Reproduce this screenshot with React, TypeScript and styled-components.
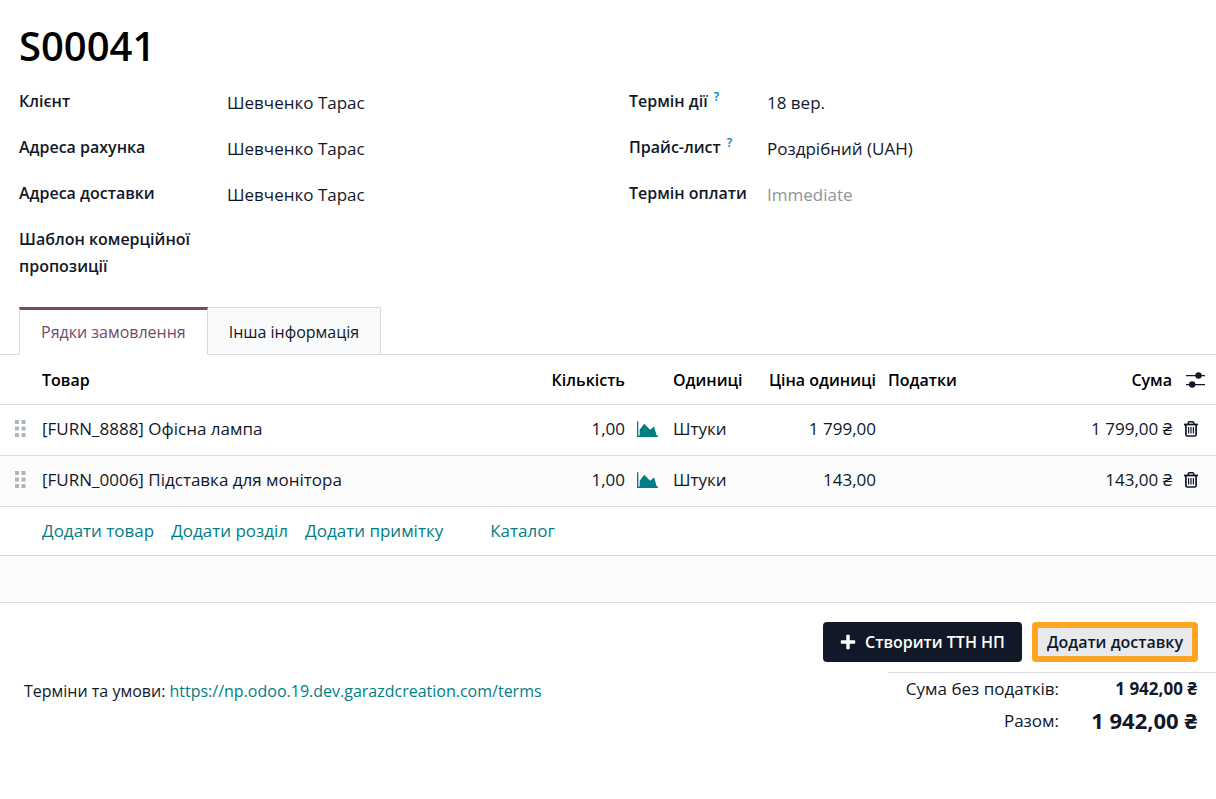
import React from "react";
import styled, { createGlobalStyle, css } from "styled-components";

const GlobalStyle = createGlobalStyle`
  *, *::before, *::after { box-sizing: border-box; }
  body {
    margin: 0;
    background: #fff;
    color: #111827;
    font: 400 17px/27px "Open Sans", "Noto Sans", sans-serif;
  }
  button { font: inherit; color: inherit; border: 0; background: none; padding: 0; cursor: pointer; }
  a { color: #017e84; text-decoration: none; }
  svg { display: block; }
`;

const Sheet = styled.main`
  padding-top: 19px;
`;

const Title = styled.h1`
  margin: 0;
  padding: 0 19px;
  color: #000;
  font-size: 40px;
  line-height: 54px;
  font-weight: 600;
`;

const FieldGroups = styled.div`
  display: grid;
  grid-template-columns: 1fr 1fr;
  column-gap: 42px;
  padding: 15px 19px 0;
`;

const FieldGroup = styled.dl<{ $label: number }>`
  display: grid;
  grid-template-columns: ${(p) => p.$label}px 1fr;
  align-content: start;
  row-gap: 19px;
  margin: 0;
`;

const FieldLabel = styled.dt`
  font-weight: 600;
  font-size: 16px;
  white-space: pre-line;
`;

const FieldValue = styled.dd<{ $muted?: boolean }>`
  margin: 0;
  padding-top: 1px;
  height: 27px;
  color: ${(p) => (p.$muted ? "#8f939b" : "inherit")};
`;

const Help = styled.sup`
  color: #0180a5;
  font-size: 12px;
  line-height: 1;
  margin-left: 6px;
`;

const Tabs = styled.div`
  display: flex;
  margin-top: 27px;
  padding: 0 19px;
  border-bottom: 1px solid #d8dadd;
`;

const Tab = styled.button<{ $active?: boolean }>`
  height: 48px;
  margin-bottom: -1px;
  padding: 0 21px;
  border: 1px solid #d8dadd;
  background: #f9fafb;
  font-size: 16px;
  ${(p) =>
    p.$active
      ? css`
          background: #fff;
          color: #714b67;
          border-top: 3px solid #714b67;
          border-bottom-color: #fff;
        `
      : css`
          border-left: 0;
          padding-top: 2px;
        `}
`;

const Lines = styled.table`
  width: 100%;
  table-layout: fixed;
  border-collapse: separate;
  border-spacing: 0;
`;

const Col = styled.col<{ $w?: number }>`
  width: ${(p) => (p.$w ? `${p.$w}px` : "auto")};
`;

const HeadCell = styled.th<{ $right?: boolean }>`
  height: 50px;
  padding: 1px 6px 0;
  border-bottom: 1px solid #d8dadd;
  color: #000;
  font-size: 16px;
  font-weight: 600;
  white-space: nowrap;
  text-align: ${(p) => (p.$right ? "right" : "left")};
`;

const Cell = styled.td<{ $right?: boolean }>`
  height: 51px;
  padding: 0 6px 3px;
  border-bottom: 1px solid #d8dadd;
  white-space: nowrap;
  text-align: ${(p) => (p.$right ? "right" : "left")};
`;

const HandleCell = styled(Cell)`
  padding-left: 15px;
`;

const Row = styled.tr`
  &:nth-child(even) { background: #fcfcfc; }
`;

const IconButton = styled.button`
  display: block;
  color: #111827;
`;

const Handle = styled(IconButton)`
  color: #adb5bd;
`;

const ForecastButton = styled(IconButton)`
  color: #017e84;
`;

const ColumnsButton = styled(IconButton)`
  margin-left: 2px;
`;

const AddRow = styled.div`
  display: flex;
  align-items: center;
  gap: 17px;
  height: 49px;
  padding: 0 42px 2px;
  border-bottom: 1px solid #d8dadd;
`;

const LinkButton = styled.button<{ $apart?: boolean }>`
  color: #017e84;
  margin-left: ${(p) => (p.$apart ? 30 : 0)}px;
`;

const Filler = styled.div`
  height: 47px;
  background: #fcfcfc;
  border-bottom: 1px solid #d8dadd;
`;

const Actions = styled.div`
  display: flex;
  justify-content: flex-end;
  gap: 10px;
  padding: 19px 18px 10px;
`;

const PrimaryButton = styled.button`
  display: flex;
  align-items: center;
  gap: 9px;
  height: 40px;
  padding: 0 17px;
  border-radius: 4px;
  background: #111827;
  color: #fff;
  font-size: 16px;
  font-weight: 600;
`;

const SecondaryButton = styled.button`
  height: 40px;
  padding: 0 9px;
  border: 6px solid #ffa521;
  border-radius: 4px;
  background: #e7e9ed;
  font-size: 16px;
  font-weight: 600;
  line-height: 28px;
`;

const Footer = styled.footer`
  display: flex;
  justify-content: space-between;
`;

const Terms = styled.p`
  margin: 0;
  padding: 6px 0 0 24px;
  font-size: 16px;
`;

const Totals = styled.dl`
  display: grid;
  grid-template-columns: 171px 138px;
  row-gap: 5px;
  justify-items: end;
  margin: 0;
  padding: 2px 19px 0 0;
  border-top: 1px solid #d8dadd;
`;

const TotalLabel = styled.dt``;

const TotalValue = styled.dd<{ $large?: boolean }>`
  margin: 0;
  font-weight: 700;
  font-size: ${(p) => (p.$large ? 22 : 17)}px;
`;

const DragIcon = () => (
  <svg width="11" height="18" viewBox="0 0 11 18" fill="currentColor" aria-hidden="true">
    {[0, 6.5, 13].map((y) => (
      <React.Fragment key={y}>
        <rect x="0" y={y} width="4" height="4" />
        <rect x="6.5" y={y} width="4" height="4" />
      </React.Fragment>
    ))}
  </svg>
);

const AreaChartIcon = () => (
  <svg width="21" height="16" viewBox="0 0 2048 1536" fill="currentColor" aria-hidden="true">
    <path d="M2048 1408v128H0V0h128v1408h1920zM1664 512l256 896H256V832l448-576 576 576z" />
  </svg>
);

const TrashIcon = () => (
  <svg width="14" height="16" viewBox="0 0 14 16" fill="none" stroke="currentColor" aria-hidden="true">
    <path d="M0 3.5h14" strokeWidth="1.8" />
    <path d="M4.200 3.200V2q0-1.200 1.200-1.200h3.200q1.200 0 1.200 1.200v1.200" strokeWidth="1.500" />
    <path d="M1.900 3.500v10q0 1.500 1.500 1.500h7.200q1.500 0 1.500-1.500v-10" strokeWidth="1.700" />
    <path d="M4.600 6v6.500M7 6v6.500M9.400 6v6.500" strokeWidth="1.200" />
  </svg>
);

const AdjustIcon = () => (
  <svg width="19" height="16" viewBox="0 0 19 16" fill="currentColor" aria-hidden="true">
    <path d="M0 2.900h19v1.300H0zM0 11.900h19v1.300H0z" />
    <circle cx="12.500" cy="3.500" r="3.200" />
    <circle cx="6.200" cy="12.500" r="3.200" />
  </svg>
);

const PlusIcon = () => (
  <svg width="16" height="16" viewBox="0 0 16 16" fill="currentColor" aria-hidden="true">
    <path d="M6.300 1.600q0-.8.8-.8h1.800q.8 0 .8.8v4.700h4.700q.8 0 .8.800v1.800q0 .8-.8.800H9.700v4.700q0 .8-.8.8H7.100q-.8 0-.8-.8V9.700H1.600q-.8 0-.8-.8V7.100q0-.8.8-.8h4.700z" />
  </svg>
);

type Field = { label: string; value?: string; help?: boolean; muted?: boolean };

const customerFields: Field[] = [
  { label: "Клієнт", value: "Шевченко Тарас" },
  { label: "Адреса рахунка", value: "Шевченко Тарас" },
  { label: "Адреса доставки", value: "Шевченко Тарас" },
  { label: "Шаблон комерційної\nпропозиції" },
];

const termFields: Field[] = [
  { label: "Термін дії", value: "18 вер.", help: true },
  { label: "Прайс-лист", value: "Роздрібний (UAH)", help: true },
  { label: "Термін оплати", value: "Immediate", muted: true },
];

const orderLines = [
  { product: "[FURN_8888] Офісна лампа", qty: "1,00", unit: "Штуки", price: "1 799,00", total: "1 799,00 ₴" },
  { product: "[FURN_0006] Підставка для монітора", qty: "1,00", unit: "Штуки", price: "143,00", total: "143,00 ₴" },
];

const Fields = ({ items, labelWidth }: { items: Field[]; labelWidth: number }) => (
  <FieldGroup $label={labelWidth}>
    {items.map((f) => (
      <React.Fragment key={f.label}>
        <FieldLabel>
          {f.label}
          {f.help && <Help>?</Help>}
        </FieldLabel>
        <FieldValue $muted={f.muted}>{f.value}</FieldValue>
      </React.Fragment>
    ))}
  </FieldGroup>
);

export default function App() {
  return (
    <Sheet>
      <GlobalStyle />
      <Title>S00041</Title>
      <FieldGroups>
        <Fields items={customerFields} labelWidth={208} />
        <Fields items={termFields} labelWidth={138} />
      </FieldGroups>

      <Tabs role="tablist">
        <Tab role="tab" aria-selected="true" $active>Рядки замовлення</Tab>
        <Tab role="tab" aria-selected="false">Інша інформація</Tab>
      </Tabs>

      <Lines>
        <colgroup>
          <Col $w={36} />
          <Col />
          <Col $w={110} />
          <Col $w={36} />
          <Col $w={88} />
          <Col $w={127} />
          <Col $w={147} />
          <Col $w={149} />
          <Col $w={38} />
        </colgroup>
        <thead>
          <tr>
            <HeadCell />
            <HeadCell>Товар</HeadCell>
            <HeadCell $right>Кількість</HeadCell>
            <HeadCell />
            <HeadCell>Одиниці</HeadCell>
            <HeadCell $right>Ціна одиниці</HeadCell>
            <HeadCell>Податки</HeadCell>
            <HeadCell $right>Сума</HeadCell>
            <HeadCell>
              <ColumnsButton aria-label="Налаштувати стовпці"><AdjustIcon /></ColumnsButton>
            </HeadCell>
          </tr>
        </thead>
        <tbody>
          {orderLines.map((l) => (
            <Row key={l.product}>
              <HandleCell>
                <Handle aria-label="Перемістити"><DragIcon /></Handle>
              </HandleCell>
              <Cell>{l.product}</Cell>
              <Cell $right>{l.qty}</Cell>
              <Cell>
                <ForecastButton aria-label="Прогноз"><AreaChartIcon /></ForecastButton>
              </Cell>
              <Cell>{l.unit}</Cell>
              <Cell $right>{l.price}</Cell>
              <Cell />
              <Cell $right>{l.total}</Cell>
              <Cell>
                <IconButton aria-label="Видалити"><TrashIcon /></IconButton>
              </Cell>
            </Row>
          ))}
        </tbody>
      </Lines>

      <AddRow>
        <LinkButton>Додати товар</LinkButton>
        <LinkButton>Додати розділ</LinkButton>
        <LinkButton>Додати примітку</LinkButton>
        <LinkButton $apart>Каталог</LinkButton>
      </AddRow>
      <Filler />

      <Actions>
        <PrimaryButton><PlusIcon />Створити ТТН НП</PrimaryButton>
        <SecondaryButton>Додати доставку</SecondaryButton>
      </Actions>
      <Footer>
        <Terms>
          Терміни та умови:{" "}
          <a href="https://np.odoo.19.dev.garazdcreation.com/terms">
            https://np.odoo.19.dev.garazdcreation.com/terms
          </a>
        </Terms>
        <Totals>
          <TotalLabel>Сума без податків:</TotalLabel>
          <TotalValue>1 942,00 ₴</TotalValue>
          <TotalLabel>Разом:</TotalLabel>
          <TotalValue $large>1 942,00 ₴</TotalValue>
        </Totals>
      </Footer>
    </Sheet>
  );
}
